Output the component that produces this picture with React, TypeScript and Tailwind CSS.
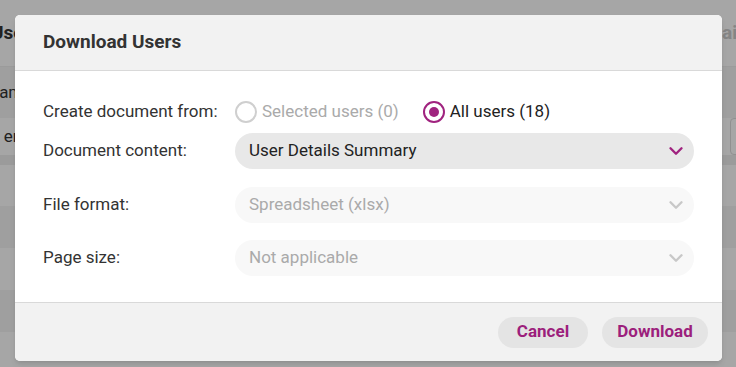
import { ChevronDown } from "lucide-react";

const bands = [
  { h: "h-[41px]", bg: "bg-white" },
  { h: "h-[42px]", bg: "bg-[#f4f4f4]" },
  { h: "h-[42px]", bg: "bg-white" },
  { h: "h-[42px]", bg: "bg-[#f4f4f4]" },
  { h: "h-[40px]", bg: "bg-white" },
];

const Backdrop = () => (
  <div className="w-[736px] h-[367px] overflow-hidden bg-white text-[#333]">
    <div className="h-[67px] flex items-center justify-between border-b border-[#eee]">
      <span className="-ml-[9px] text-[19px] font-bold">Users</span>
      <span className="-mr-[16px] text-[19px] font-bold text-[#ccc]">Emails</span>
    </div>
    <div className="h-[51px] flex items-center bg-[#f4f4f4]">
      <span className="-ml-[13px] text-[17px]">Name</span>
    </div>
    <div className="h-[37px] flex items-center justify-between">
      <span className="-ml-[6px] text-[17px]">t email</span>
      <div className="w-[20px] h-[37px] -mr-[14px] border border-[#ddd] rounded" />
    </div>
    <div className="h-[10px] bg-[#eee]" />
    {bands.map((b, i) => (
      <div key={i} className={`${b.h} ${b.bg}`} />
    ))}
  </div>
);

const Select = ({ value, active }: { value: string; active?: boolean }) => (
  <div
    className={`flex-1 h-[36px] rounded-full flex items-center justify-between pl-[14px] pr-[7px] ${
      active ? "bg-[#e8e8e8] text-[#222]" : "bg-[#f8f8f8] text-[#aaa]"
    }`}
  >
    <span>{value}</span>
    <ChevronDown size={22} strokeWidth={2.6} className={active ? "text-[#a0237f]" : "text-[#c8c8c8]"} />
  </div>
);

export default function App() {
  return (
    <div className="relative w-[736px] h-[367px] overflow-hidden" style={{ fontFamily: "Roboto, 'Liberation Sans', sans-serif" }}>
      <Backdrop />
      <div className="absolute inset-0 bg-black/35" />
      <div className="absolute left-[15px] top-[15px] w-[707px] h-[346px] rounded-[5px] bg-white shadow-md flex flex-col overflow-hidden">
        <div className="h-[56px] flex items-center px-[28px] bg-[#f2f2f2] border-b border-[#d9d9d9]">
          <h2 className="text-[19px] font-bold text-[#333]">Download Users</h2>
        </div>
        <div className="flex-1 flex flex-col px-[28px] pt-[20px] text-[17px] text-[#333]">
          <div className="flex items-center h-[42px]">
            <span className="w-[192px]">Create document from:</span>
            <label className="flex items-center gap-[5px] text-[#aaa]">
              <span className="w-[22px] h-[22px] rounded-full border-2 border-[#cfcfcf]" />
              Selected users (0)
            </label>
            <label className="flex items-center gap-[5px] ml-[24px] text-[#222]">
              <span className="w-[22px] h-[22px] rounded-full border-2 border-[#a0237f] flex items-center justify-center">
                <span className="w-[10px] h-[10px] rounded-full bg-[#a0237f]" />
              </span>
              All users (18)
            </label>
          </div>
          <div className="flex items-center">
            <span className="w-[192px]">Document content:</span>
            <Select value="User Details Summary" active />
          </div>
          <div className="flex items-center mt-[18px]">
            <span className="w-[192px]">File format:</span>
            <Select value="Spreadsheet (xlsx)" />
          </div>
          <div className="flex items-center mt-[17px]">
            <span className="w-[192px]">Page size:</span>
            <Select value="Not applicable" />
          </div>
        </div>
        <div className="h-[59px] flex items-center justify-end gap-[14px] px-[14px] bg-[#f2f2f2] border-t border-[#d9d9d9]">
          <button className="h-[31px] w-[90px] rounded-full bg-[#e4e4e4] text-[17px] font-bold text-[#9c1f7c]">Cancel</button>
          <button className="h-[31px] w-[106px] rounded-full bg-[#e4e4e4] text-[17px] font-bold text-[#9c1f7c]">Download</button>
        </div>
      </div>
    </div>
  );
}
